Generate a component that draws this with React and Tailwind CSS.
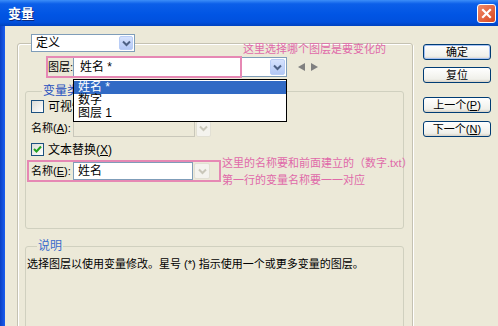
import { useState } from 'react'

const PINK = 'text-[#e06aa9]'

function Chevron({ disabled }) {
  return (
    <svg width="9" height="7" viewBox="0 0 9 7">
      <path
        d="M1 1.5 L4.5 5 L8 1.5"
        fill="none"
        stroke={disabled ? '#c9c7ba' : '#4d6185'}
        strokeWidth="2"
      />
    </svg>
  )
}

function DropButton({ disabled, className = '' }) {
  return (
    <div
      className={`flex items-center justify-center rounded-[2px] border ${
        disabled
          ? 'border-[#e2e0d4] bg-[#f4f3ee]'
          : 'border-[#b9cdf6] bg-[linear-gradient(#d6e2fd,#b3c8f6)]'
      } ${className}`}
    >
      <Chevron disabled={disabled} />
    </div>
  )
}

function Checkbox({ checked }) {
  return (
    <div className="flex h-[13px] w-[13px] shrink-0 items-center justify-center border border-[#1c5180] bg-[linear-gradient(135deg,#dcdcd7,#ffffff)]">
      {checked && (
        <svg width="9" height="9" viewBox="0 0 9 9">
          <path d="M1 4 L3.5 6.5 L8 1.5" fill="none" stroke="#21a121" strokeWidth="2" />
        </svg>
      )}
    </div>
  )
}

function XpButton({ children, primary }) {
  return (
    <button
      type="button"
      className={`flex h-[16px] w-[68px] items-center justify-center rounded-[3px] border border-[#003c74] bg-[linear-gradient(#ffffff,#f0f0ea_80%,#d6d0c5)] text-[11px] leading-none text-black ${
        primary ? 'shadow-[inset_0_0_0_1px_#a6c2f4]' : ''
      }`}
    >
      {children}
    </button>
  )
}

export default function App() {
  const [layer] = useState('姓名 *')
  const layers = ['姓名 *', '数字', '图层 1']

  return (
    <div className="flex h-[326px] w-[498px] flex-col overflow-hidden bg-[#ece9d8] font-['Liberation_Sans','Noto_Sans_CJK_SC',sans-serif] text-black">
      {/* title bar */}
      <div className="flex h-[26px] shrink-0 items-center justify-between bg-[linear-gradient(#3d8ef8_0%,#0c5fe9_15%,#0155e4_55%,#0150dd_85%,#0042bf_100%)] pl-[8px] pr-[2px]">
        <span className="text-[13px] font-bold leading-none text-white [text-shadow:1px_1px_0_#0a2a80]">变量</span>
        <div className="flex h-[19px] w-[19px] items-center justify-center rounded-[3px] border border-white bg-[linear-gradient(135deg,#f08a6a,#d9471f)]">
          <svg width="11" height="11" viewBox="0 0 11 11">
            <path d="M2 2 L9 9 M9 2 L2 9" stroke="#fff" strokeWidth="2.2" strokeLinecap="square" />
          </svg>
        </div>
      </div>

      <div className="flex min-h-0 flex-1">
        <div className="w-[5px] shrink-0 bg-[linear-gradient(90deg,#0a3fc4,#1a5ef0)]" />

        <div className="flex flex-1 pl-[12px] pt-[8px]">
          {/* main frame */}
          <fieldset className="h-[300px] w-[396px] shrink-0 rounded-[3px] border border-[#c5c2b2] shadow-[inset_1px_1px_0_#fff,1px_1px_0_#fff]">
            <legend className="ml-[13px]">
              <div className="flex h-[18px] w-[104px] items-center justify-between border border-[#7f9db9] bg-white pl-[4px] pr-[1px]">
                <span className="text-[12px] leading-none">定义</span>
                <DropButton className="h-[14px] w-[14px]" />
              </div>
            </legend>

            {/* layer row */}
            <div className="relative mt-[4px] flex h-[22px] items-center pl-[30px]">
              <span className="w-[25px] shrink-0 whitespace-nowrap text-[11px] leading-none">图层:</span>
              <div className="flex h-[20px] w-[214px] shrink-0 items-center justify-between border border-[#7f9db9] bg-white pl-[6px] pr-[1px]">
                <span className="text-[12px] leading-none">{layer}</span>
                <DropButton className="h-[16px] w-[15px]" />
              </div>
              <div className="ml-[11px] flex items-center gap-[6px]">
                <svg width="7" height="8" viewBox="0 0 7 8"><path d="M7 0 L0 4 L7 8 Z" fill="#808080" /></svg>
                <svg width="7" height="8" viewBox="0 0 7 8"><path d="M0 0 L7 4 L0 8 Z" fill="#808080" /></svg>
              </div>

              <div className="pointer-events-none absolute left-[28px] top-0 h-[22px] w-[196px] border-2 border-[#e688b4]" />
              <span className={`absolute left-[225px] top-[-13px] whitespace-nowrap text-[11px] leading-[12px] ${PINK}`}>
                这里选择哪个图层是要变化的
              </span>

              {/* open list */}
              <ul className="absolute left-[55px] top-[23px] z-10 w-[214px] border border-black bg-white py-[1px] text-[12px] leading-[13px]">
                {layers.map((l) => (
                  <li
                    key={l}
                    className={`px-[4px] ${l === layer ? 'bg-[#316ac5] text-white' : ''}`}
                  >
                    {l}
                  </li>
                ))}
              </ul>
            </div>

            {/* variable type group */}
            <fieldset className="ml-[7px] mt-[6px] w-[379px] rounded-[3px] border border-[#d0d0bf] pb-[46px] pl-[5px]">
              <legend className="ml-[11px] px-[1px] text-[12px] leading-[14px] text-[#1f4fbf]">变量类型</legend>

              <div className="mt-[2px] flex h-[13px] items-center gap-[4px]">
                <Checkbox />
                <span className="text-[12px] leading-none">可视性</span>
              </div>

              <div className="mt-[7px] flex h-[17px] items-center">
                <span className="w-[42px] shrink-0 whitespace-nowrap text-[11px] leading-none">
                  名称(<span className="underline">A</span>):
                </span>
                <div className="h-[17px] w-[122px] border border-[#c9c7ba] bg-[#ece9d8]" />
                <DropButton disabled className="ml-[1px] h-[16px] w-[15px]" />
              </div>

              <div className="mt-[6px] flex h-[13px] items-center gap-[4px]">
                <Checkbox checked />
                <span className="text-[12px] leading-none">
                  文本替换(<span className="underline">X</span>)
                </span>
              </div>

              <div className="relative mt-[4px] flex h-[22px] items-center">
                <span className="w-[42px] shrink-0 whitespace-nowrap text-[11px] leading-none">
                  名称(<span className="underline">E</span>):
                </span>
                <div className="flex h-[18px] w-[120px] items-center border border-[#7f9db9] bg-white pl-[4px]">
                  <span className="text-[12px] leading-none">姓名</span>
                </div>
                <DropButton disabled className="ml-[1px] h-[16px] w-[16px]" />

                <div className="pointer-events-none absolute left-[-4px] top-0 h-[22px] w-[194px] border-2 border-[#e688b4]" />
                <div className={`absolute left-[191px] top-[-5px] whitespace-nowrap text-[11px] leading-[17px] ${PINK}`}>
                  <div>这里的名称要和前面建立的（数字.txt）</div>
                  <div>第一行的变量名称要一一对应</div>
                </div>
              </div>
            </fieldset>

            {/* description group */}
            <fieldset className="ml-[7px] mt-[10px] h-[100px] w-[379px] rounded-[3px] border border-[#d0d0bf]">
              <legend className="ml-[11px] px-[1px] text-[12px] leading-[14px] text-[#3a6ccc]">说明</legend>
              <p className="ml-[1px] mt-[4px] whitespace-nowrap text-[11px] leading-[14px]">
                选择图层以使用变量修改。星号 (*) 指示使用一个或更多变量的图层。
              </p>
            </fieldset>
          </fieldset>

          {/* buttons */}
          <div className="ml-[10px] flex flex-col pt-[10px]">
            <XpButton primary>确定</XpButton>
            <div className="mt-[7px]"><XpButton>复位</XpButton></div>
            <div className="mt-[14px]">
              <XpButton>上一个(<span className="underline">P</span>)</XpButton>
            </div>
            <div className="mt-[8px]">
              <XpButton>下一个(<span className="underline">N</span>)</XpButton>
            </div>
          </div>
        </div>
      </div>
    </div>
  )
}
